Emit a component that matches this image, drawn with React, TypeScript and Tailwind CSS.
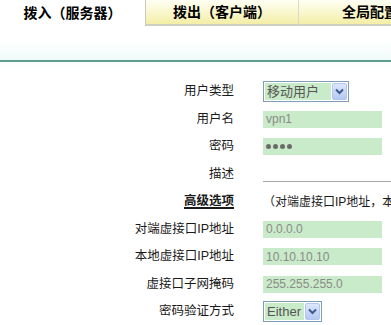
import React from "react";

const cjk = "font-['Liberation_Sans','Noto_Sans_CJK_SC',sans-serif]";

function Chevron() {
  return (
    <svg width="9" height="7" viewBox="0 0 9 7" fill="none">
      <path d="M1 1.5 L4.5 5 L8 1.5" stroke="#3f5a8c" strokeWidth="2" />
    </svg>
  );
}

function FakeSelect({ value, width }: { value: string; width: string }) {
  return (
    <div className={`flex h-[21px] ${width} items-stretch border border-[#7f9db9] bg-white p-[1px]`}>
      <div className="flex flex-1 items-center bg-[#c9ebc9] pl-[2px] text-[13px] text-[#555]">{value}</div>
      <div className="ml-[1px] flex w-[15px] items-center justify-center rounded-[2px] border border-[#b4c6ee] bg-gradient-to-b from-[#dde7fb] to-[#b3c8f3]">
        <Chevron />
      </div>
    </div>
  );
}

function Row({ label, children, bold }: { label: string; children?: React.ReactNode; bold?: boolean }) {
  return (
    <div className="flex h-[27.5px] items-center">
      <div
        className={`w-[234px] shrink-0 text-right text-[12.5px] ${
          bold ? "font-bold underline decoration-2 underline-offset-2" : ""
        } text-[#1a1a1a]`}
      >
        {label}
      </div>
      <div className="ml-[29px] flex min-w-0 flex-1 items-center">{children}</div>
    </div>
  );
}

function GreenInput({ children }: { children?: React.ReactNode }) {
  return (
    <div className="flex h-[17px] w-[119px] items-center bg-[#c9ebc9] pl-[3px] text-[12px] text-[#8a8a8a]">
      {children}
    </div>
  );
}

export default function App() {
  return (
    <div className={`h-[325px] w-[391px] overflow-hidden bg-white ${cjk}`}>
      <div className="flex h-[26px] w-[600px] text-[14px] font-bold text-black">
        <div className="flex w-[145px] items-center justify-center bg-white">拨入（服务器）</div>
        <div className="flex w-[154px] items-center justify-center border-b-2 border-l border-r border-b-[#cfcfc0] border-l-[#c9c9c0] border-r-[#d8d8cc] bg-gradient-to-b from-[#fffff4] to-[#f4eea6]">
          拨出（客户端）
        </div>
        <div className="flex w-[160px] items-center border-b-2 border-b-[#cfcfc0] bg-gradient-to-b from-[#fffff4] to-[#f4eea6] pl-[43px]">
          全局配置
        </div>
      </div>
      <div className="h-[14px]" />
      <div className="h-[20px] bg-gradient-to-b from-white to-[#f1fafa]" />
      <div className="h-[2px] bg-[#5c9c8e]" />
      <div className="h-[8px] bg-gradient-to-b from-[#fafcfc] to-white" />
      <div className="pt-[8px]">
        <Row label="用户类型">
          <FakeSelect value="移动用户" width="w-[86px]" />
        </Row>
        <Row label="用户名">
          <GreenInput>vpn1</GreenInput>
        </Row>
        <Row label="密码">
          <GreenInput>
            <span className="flex gap-[2px]">
              <span className="h-[5px] w-[5px] rounded-full bg-[#6b6b6b]" />
              <span className="h-[5px] w-[5px] rounded-full bg-[#6b6b6b]" />
              <span className="h-[5px] w-[5px] rounded-full bg-[#6b6b6b]" />
              <span className="h-[5px] w-[5px] rounded-full bg-[#6b6b6b]" />
            </span>
          </GreenInput>
        </Row>
        <Row label="描述">
          <div className="mt-[14px] h-[1px] w-full bg-[#a8a8a8]" />
        </Row>
        <Row label="高级选项" bold>
          <span className="whitespace-nowrap text-[12px] text-[#1a1a1a]">
            （对端虚接口IP地址，本地虚接口IP地址，虚接口子网掩码）
          </span>
        </Row>
        <Row label="对端虚接口IP地址">
          <GreenInput>0.0.0.0</GreenInput>
        </Row>
        <Row label="本地虚接口IP地址">
          <GreenInput>10.10.10.10</GreenInput>
        </Row>
        <Row label="虚接口子网掩码">
          <GreenInput>255.255.255.0</GreenInput>
        </Row>
        <Row label="密码验证方式">
          <FakeSelect value="Either" width="w-[59px]" />
        </Row>
      </div>
    </div>
  );
}
